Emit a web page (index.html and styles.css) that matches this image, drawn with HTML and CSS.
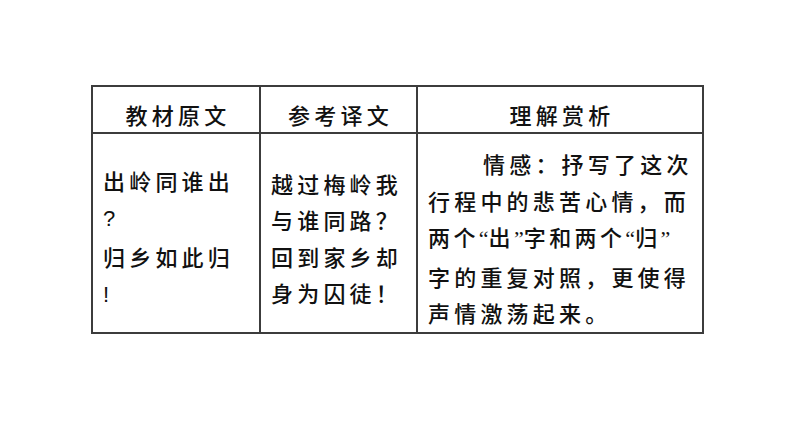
FILE: index.html
```html
<!DOCTYPE html>
<html lang="zh-CN">
<head>
<meta charset="utf-8">
<title>出岭同谁出</title>
<link rel="stylesheet" href="styles.css">
</head>
<body>
<div class="page">
  <table class="poem">
    <colgroup>
      <col class="c1">
      <col class="c2">
      <col class="c3">
    </colgroup>
    <thead>
      <tr class="head">
        <th>教材原文</th>
        <th>参考译文</th>
        <th>理解赏析</th>
      </tr>
    </thead>
    <tbody>
      <tr class="body">
        <td class="orig">
          <span class="line">出岭同谁出</span>
          <span class="line"><span class="latin">?</span></span>
          <span class="line">归乡如此归</span>
          <span class="line"><span class="latin">!</span></span>
        </td>
        <td class="trans">
          <span class="line">越过梅岭我</span>
          <span class="line">与谁同路？</span>
          <span class="line">回到家乡却</span>
          <span class="line">身为囚徒！</span>
        </td>
        <td class="note">
          <span class="line indent">情感：抒写了这次</span>
          <span class="line">行程中的悲苦心情，而</span>
          <span class="line tight">两个<span class="q">“</span>出<span class="q">”</span>字和两个<span class="q">“</span>归<span class="q">”</span></span>
          <span class="line">字的重复对照，更使得</span>
          <span class="line">声情激荡起来。</span>
        </td>
      </tr>
    </tbody>
  </table>
</div>
</body>
</html>
```

FILE: styles.css
```css
html, body {
  margin: 0;
  padding: 0;
  background: #ffffff;
}

body {
  font-family: "Noto Sans CJK SC", "Noto Sans", sans-serif;
  color: #111111;
}

.page {
  padding: 85px 0 0 91px;
}

.poem {
  border-collapse: collapse;
  table-layout: fixed;
  width: 611px;
}

.c1 { width: 168px; }
.c2 { width: 157px; }
.c3 { width: 286px; }

.poem th,
.poem td {
  border: 2px solid #3c3c3c;
  font-size: 22px;
  letter-spacing: 4.2px;
  vertical-align: middle;
  font-weight: 500;
}

.head th {
  height: 36px;
  padding: 9px 0 0 4px;
  text-align: center;
  line-height: 36px;
}

.body td {
  height: 184px;
  padding: 11px 6px 1px 10px;
  text-align: left;
  line-height: 36.5px;
}

.line {
  display: block;
  white-space: nowrap;
}

.indent {
  text-indent: 55px;
}

.tight {
  letter-spacing: 3.4px;
}

.latin {
  font-family: "Liberation Sans", sans-serif;
  letter-spacing: 0;
}

.q {
  font-family: "Liberation Serif", serif;
  letter-spacing: 0;
}
```
